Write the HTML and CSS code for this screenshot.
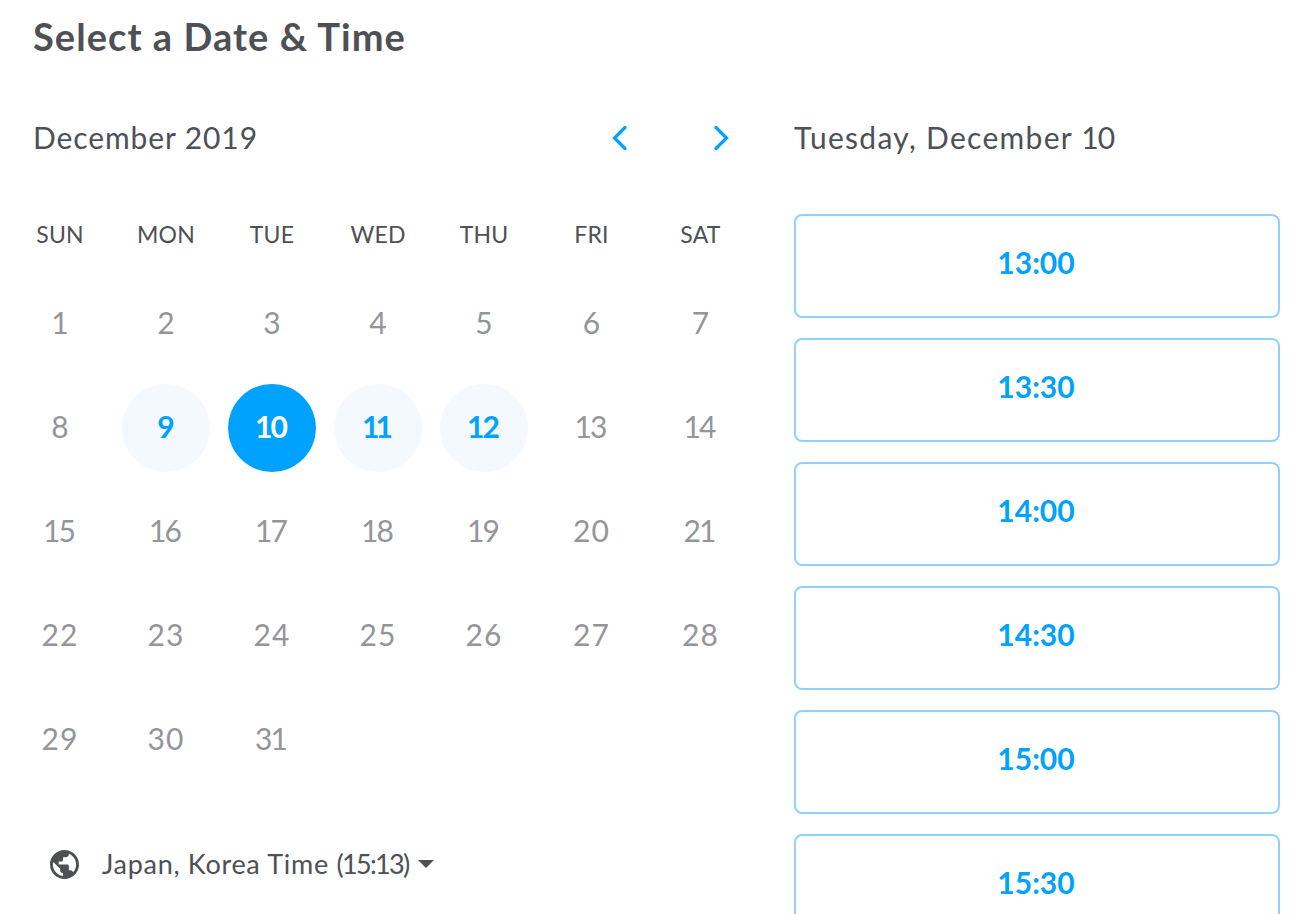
FILE: index.html
```html
<!DOCTYPE html>
<html lang="en">
<head>
    <meta charset="UTF-8">
    <meta name="viewport" content="width=device-width, initial-scale=1.0">
    <title>Select a Date &amp; Time</title>
    <link rel="stylesheet" href="styles.css">
</head>
<body>
    <h1 class="title">Select a Date &amp; Time</h1>

    <div class="booking">
        <div class="calendar">
            <div class="month-bar">
                <h2 class="month">December 2019</h2>
                <div class="arrows">
                    <svg class="arrow" viewBox="0 0 16 26"><path d="M13 2.500 2.500 13 13 23.500"/></svg>
                    <svg class="arrow" viewBox="0 0 16 26"><path d="M3 2.500 13.500 13 3 23.500"/></svg>
                </div>
            </div>

            <div class="grid weekdays">
                <span>SUN</span>
                <span>MON</span>
                <span>TUE</span>
                <span>WED</span>
                <span>THU</span>
                <span>FRI</span>
                <span>SAT</span>
            </div>

            <div class="grid days">
                <span class="day">1</span>
                <span class="day">2</span>
                <span class="day">3</span>
                <span class="day">4</span>
                <span class="day">5</span>
                <span class="day">6</span>
                <span class="day">7</span>
                <span class="day">8</span>
                <span class="day available">9</span>
                <span class="day available selected teen">10</span>
                <span class="day available eleven">11</span>
                <span class="day available teen">12</span>
                <span class="day teen">13</span>
                <span class="day teen">14</span>
                <span class="day teen">15</span>
                <span class="day teen">16</span>
                <span class="day teen">17</span>
                <span class="day teen">18</span>
                <span class="day teen">19</span>
                <span class="day wide">20</span>
                <span class="day teen">21</span>
                <span class="day wide">22</span>
                <span class="day wide">23</span>
                <span class="day wide">24</span>
                <span class="day wide">25</span>
                <span class="day wide">26</span>
                <span class="day wide">27</span>
                <span class="day wide">28</span>
                <span class="day wide">29</span>
                <span class="day wide">30</span>
                <span class="day teen">31</span>
            </div>

            <div class="timezone">
                <svg class="globe" viewBox="2 2 20 20"><path d="M12 2C6.480 2 2 6.480 2 12s4.480 10 10 10 10-4.480 10-10S17.520 2 12 2zm-1 17.930c-3.950-.490-7-3.850-7-7.930 0-.620.080-1.210.210-1.790L9 15v1c0 1.100.900 2 2 2v1.930zm6.900-2.540c-.260-.810-1-1.390-1.900-1.390h-1v-3c0-.550-.450-1-1-1H8v-2h2c.550 0 1-.450 1-1V7h2c1.100 0 2-.900 2-2v-.410c2.930 1.190 5 4.060 5 7.410 0 2.080-.800 3.970-2.100 5.390z"/></svg>
                <span class="timezone-name">Japan, Korea Time <span class="timezone-time">(15:13)</span></span>
                <span class="caret"></span>
            </div>
        </div>

        <div class="times">
            <h2 class="chosen-date">Tuesday, December <span class="chosen-day">10</span></h2>
            <div class="slots">
                <button class="slot">13:00</button>
                <button class="slot">13:30</button>
                <button class="slot">14:00</button>
                <button class="slot">14:30</button>
                <button class="slot">15:00</button>
                <button class="slot">15:30</button>
            </div>
        </div>
    </div>
</body>
</html>
```

FILE: styles.css
```css
* {
    margin: 0;
    padding: 0;
    box-sizing: border-box;
}

body {
    font-family: Lato, sans-serif;
    background: #fff;
    color: #4d5055;
    height: 100vh;
    overflow: hidden;
}

.title {
    padding: 14px 0 0 33px;
    font-size: 38px;
    line-height: 44px;
    font-weight: 700;
    letter-spacing: 1.05px;
}

.booking {
    display: flex;
}

.calendar {
    width: 794px;
    padding-left: 16px;
}

.month-bar {
    display: flex;
    justify-content: space-between;
    align-items: center;
    height: 40px;
    margin-top: 60px;
    padding: 0 65px 0 17px;
}

.month,
.chosen-date {
    padding-bottom: 2px;
    font-size: 30px;
    line-height: 38px;
    font-weight: 400;
    letter-spacing: 0.9px;
}

.arrows {
    display: flex;
    gap: 85px;
}

.arrow {
    width: 16px;
    height: 26px;
    fill: none;
    stroke: #00a2ff;
    stroke-width: 3.2;
    stroke-linecap: round;
}

.grid {
    display: grid;
    grid-template-columns: repeat(4, 106px) 107.500px 109px 108px;
}

.weekdays {
    margin-top: 61px;
    font-size: 23px;
    line-height: 30px;
    letter-spacing: 0.2px;
}

.weekdays span {
    width: 88px;
    text-align: center;
}

.days {
    grid-auto-rows: 104px;
    margin-top: 31px;
}

.day {
    display: flex;
    justify-content: center;
    align-items: center;
    width: 88px;
    height: 88px;
    padding-bottom: 4px;
    border-radius: 50%;
    font-size: 30px;
    color: #949599;
}

.available {
    background: #f4f9ff;
    color: #00a2ff;
    font-weight: 700;
}

.selected {
    background: #00a2ff;
    color: #fff;
}

/* numbers with a 1 sit tighter than the rest */
.teen {
    padding-right: 3px;
    letter-spacing: -2px;
}

.eleven {
    padding-right: 5px;
    letter-spacing: -4px;
}

.wide {
    letter-spacing: 1px;
}

.timezone {
    display: flex;
    align-items: center;
    height: 40px;
    margin-top: 44px;
    padding-left: 34px;
}

.globe {
    width: 29px;
    height: 29px;
    fill: #4d5055;
}

.timezone-name {
    margin-left: 23px;
    font-size: 27px;
    line-height: 40px;
    letter-spacing: 0.7px;
}

.timezone-time {
    letter-spacing: -1.7px;
}

.caret {
    margin-left: 10px;
    border: 8px solid transparent;
    border-top-color: #4d5055;
    border-bottom: 0;
}

.times {
    width: 486px;
}

.chosen-date {
    margin-top: 60px;
    letter-spacing: 1.300px;
}

.chosen-day {
    letter-spacing: -1px;
}

.slots {
    display: flex;
    flex-direction: column;
    gap: 20px;
    margin-top: 56px;
}

.slot {
    height: 104px;
    padding: 0 2px 8px 0;
    background: #fff;
    border: 2px solid #91d0ff;
    border-radius: 8px;
    color: #00a2ff;
    font-family: inherit;
    font-size: 30px;
    font-weight: 700;
    cursor: pointer;
}
```
